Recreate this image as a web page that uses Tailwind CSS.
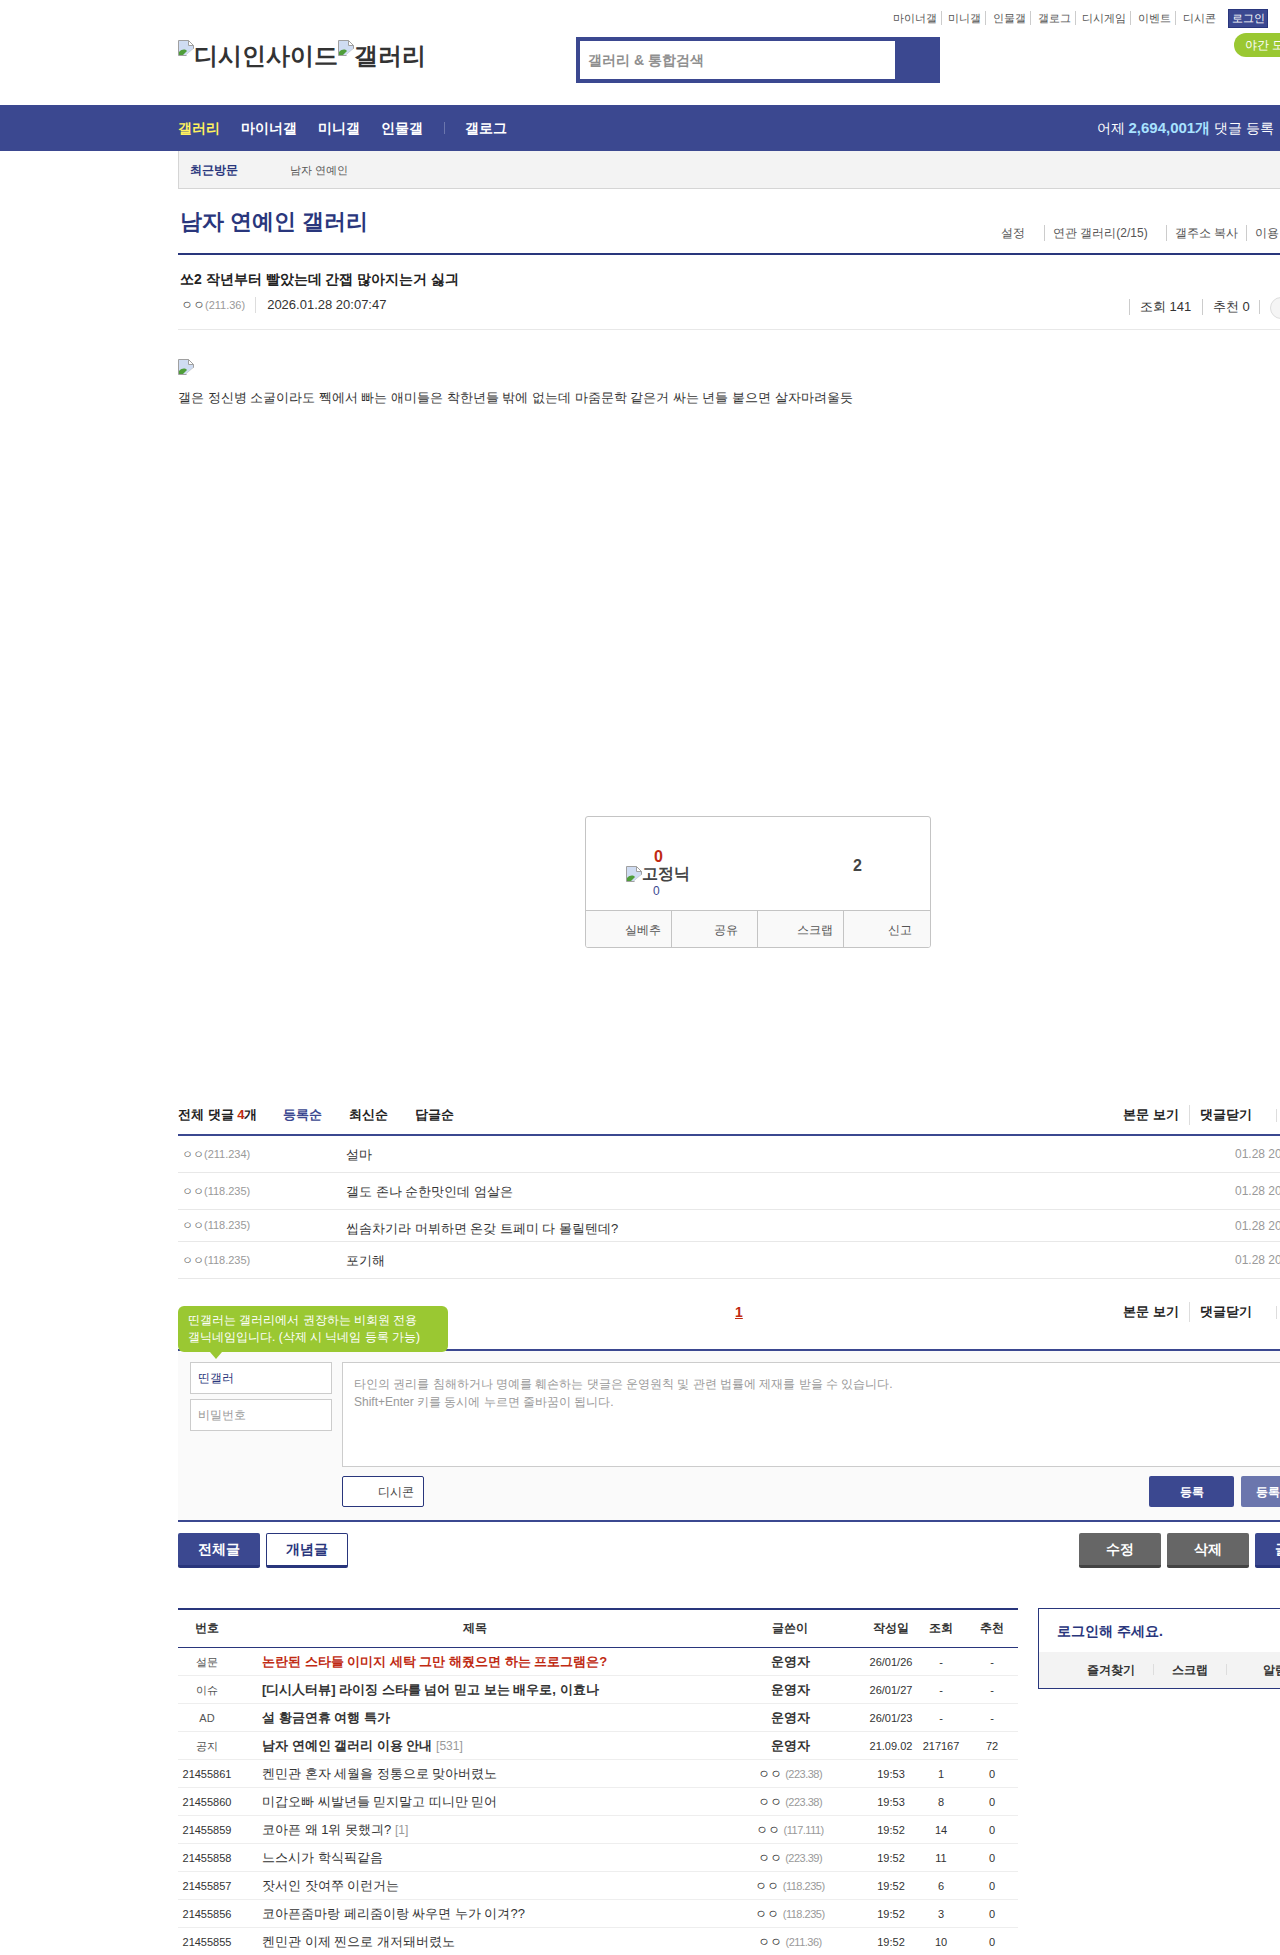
<!doctype html>
<html lang="ko"><head><meta charset="utf-8"><script src="https://cdn.jsdelivr.net/npm/@tailwindcss/browser@4"></script></head>
<body class="overflow-hidden bg-white font-['Liberation_Sans',sans-serif] text-[#333]">
<div class="relative h-[1955px] w-[1280px] overflow-hidden">

<header class="relative flex h-[105px] pl-[178px]">
  <div class="mt-[40px] flex h-[28px] w-[398px] items-start text-[24px] font-bold leading-[28px] text-[#333]">
    <svg class="h-4 w-4 shrink-0" viewBox="0 0 16 16"><path d="M.5.5h10l5 5v3L8 15.5H.5z" fill="#cfdcf2" stroke="#a0a0a0"/><path d="M10.5.5v5h5z" fill="#fff" stroke="#a0a0a0"/><path d="M1 15v-3c3-3 6-3 8-1l-4 4z" fill="#4f9e3a"/><path d="M8 15l7-6v6z" fill="#fff"/></svg><span class="mt-[2px]">디시인사이드</span>
    <svg class="h-4 w-4 shrink-0" viewBox="0 0 16 16"><path d="M.5.5h10l5 5v3L8 15.5H.5z" fill="#cfdcf2" stroke="#a0a0a0"/><path d="M10.5.5v5h5z" fill="#fff" stroke="#a0a0a0"/><path d="M1 15v-3c3-3 6-3 8-1l-4 4z" fill="#4f9e3a"/><path d="M8 15l7-6v6z" fill="#fff"/></svg><span class="mt-[2px]">갤러리</span>
  </div>
  <div class="mt-[37px] flex h-[46px] w-[364px] border-y-4 border-l-4 border-[#3b4890] bg-[#3b4890]">
    <div class="flex h-[38px] w-[315px] items-center bg-white pl-2 text-[14px] font-bold text-[#8f8f8f]">갤러리 &amp; 통합검색</div>
  </div>
  <nav class="absolute left-[893px] top-[11px] flex h-[14px] items-center text-[11px] leading-[14px] text-[#555] whitespace-nowrap">
    <span class="w-[49px] border-r border-[#ccc]">마이너갤</span><span class="w-[44px] border-r border-[#ccc] pl-[6px]">미니갤</span><span class="w-[45px] border-r border-[#ccc] pl-[7px]">인물갤</span><span class="w-[45px] border-r border-[#ccc] pl-[7px]">갤로그</span><span class="w-[55px] border-r border-[#ccc] pl-[6px]">디시게임</span><span class="w-[45px] border-r border-[#ccc] pl-[7px]">이벤트</span><span class="pl-[7px]">디시콘</span>
  </nav>
  <div class="absolute left-[1228px] top-[9px] flex h-[19px] w-[40px] items-center justify-center border border-[#29367c] bg-[#3b4890] text-[11px] text-white">로그인</div>
  <div class="absolute left-[1234px] top-[33px] flex h-[24px] w-[70px] items-center whitespace-nowrap rounded-l-[12px] bg-[#9ac832] pl-[11px] text-[12px] text-white">야간 모드</div>
</header>

<div class="flex h-[46px] items-center justify-between bg-[#3b4890] pl-[178px] pr-[6px] text-[14px] font-bold text-white">
  <div class="flex items-center">
    <span class="w-[63px] text-[#fff25e]">갤러리</span><span class="w-[77px]">마이너갤</span><span class="w-[63px]">미니갤</span><span class="w-[63px]">인물갤</span><span class="h-[12px] border-l border-[#6b76ad]"></span><span class="ml-[20px]">갤로그</span>
  </div>
  <div class="text-[14px] font-normal">어제 <b class="text-[15px] text-[#a8e2ff]">2,694,001개</b> 댓글 등록</div>
</div>

<div class="ml-[178px] flex h-[38px] items-center border-b border-l border-[#d5d5d5] bg-[#f3f3f3] pl-[11px] pt-[1px] text-[12px]">
  <b class="w-[100px] text-[#29367c]">최근방문</b><span class="text-[11px] text-[#555]">남자 연예인</span>
</div>

<main class="ml-[178px] w-[1160px]">
  <div class="flex h-[66px] items-start justify-between border-b-2 border-[#29367c]">
    <h1 class="ml-[2px] mt-[19px] text-[22px] font-bold leading-[28px] text-[#29367c]">남자 연예인 갤러리</h1>
    <div class="mt-[36px] flex items-center whitespace-nowrap text-[12px] leading-[16px] text-[#555]">
      <span class="w-[43px]">설정</span><span class="w-[122px] border-l border-[#ccc] pl-[8px]">연관 갤러리(2/15)</span><span class="w-[80px] border-l border-[#ccc] pl-[8px]">갤주소 복사</span><span class="w-[92px] border-l border-[#ccc] pl-[8px]">이용 안내</span>
    </div>
  </div>

  <div class="relative h-[75px] border-b border-[#e8e8e8]">
    <h2 class="absolute left-[2px] top-[14px] text-[14px] font-bold leading-[20px] text-[#222]">쏘2 작년부터 빨았는데 간잽 많아지는거 싫긔</h2>
    <div class="absolute left-[3px] top-[42px] flex items-center text-[12px] leading-[16px]">
      <span class="text-[#555]">ㅇㅇ</span><span class="text-[11px] text-[#999]">(211.36)</span><span class="ml-[10px] border-l border-[#ddd] pl-[11px] text-[13px] text-[#333]">2026.01.28 20:07:47</span>
    </div>
    <div class="absolute left-[951px] top-[44px] flex items-center whitespace-nowrap text-[13px] leading-[16px] text-[#333]">
      <span class="w-[73px] border-l border-[#ccc] pl-[10px]">조회 141</span><span class="w-[57px] border-l border-[#ccc] pl-[10px]">추천 0</span><span class="h-[14px] border-l border-[#ccc]"></span>
    </div>
    <div class="absolute left-[1092px] top-[42px] h-[22px] w-[40px] rounded-full border border-[#ddd] bg-[#f5f5f5]"></div>
  </div>

  <div class="pt-[29px]">
    <svg class="block h-4 w-4" viewBox="0 0 16 16"><path d="M.5.5h10l5 5v3L8 15.5H.5z" fill="#cfdcf2" stroke="#a0a0a0"/><path d="M10.5.5v5h5z" fill="#fff" stroke="#a0a0a0"/><path d="M1 15v-3c3-3 6-3 8-1l-4 4z" fill="#4f9e3a"/><path d="M8 15l7-6v6z" fill="#fff"/></svg>
    <p class="mt-[14px] text-[13px] leading-[18px] text-[#333]">갤은 정신병 소굴이라도 쩩에서 빠는 애미들은 착한년들 밖에 없는데 마줌문학 같은거 싸는 년들 붙으면 살자마려울듯</p>
  </div>

  <div class="ml-[407px] mt-[409px] h-[132px] w-[346px] overflow-hidden rounded-[3px] border border-[#c4c4c4]">
    <div class="relative h-[94px] border-b border-[#c4c4c4]">
      <b class="absolute left-[68px] top-[30px] text-[16px] leading-[20px] text-[#c02a12]">0</b>
      <div class="absolute left-[40px] top-[47px] flex items-center text-[16px] font-bold leading-[20px] text-[#444]"><svg class="h-4 w-4 shrink-0" viewBox="0 0 16 16"><path d="M.5.5h10l5 5v3L8 15.5H.5z" fill="#cfdcf2" stroke="#a0a0a0"/><path d="M10.5.5v5h5z" fill="#fff" stroke="#a0a0a0"/><path d="M1 15v-3c3-3 6-3 8-1l-4 4z" fill="#4f9e3a"/><path d="M8 15l7-6v6z" fill="#fff"/></svg>고정닉</div>
      <span class="absolute left-[67px] top-[66px] text-[12px] leading-[16px] text-[#3b4890]">0</span>
      <b class="absolute left-[267px] top-[39px] text-[16px] leading-[20px] text-[#444]">2</b>
    </div>
    <div class="grid h-[36px] grid-cols-[86px_86px_86px_86px] bg-[#f9f9f9] text-[12px] text-[#555]">
      <div class="flex items-center justify-end border-r border-[#c4c4c4] pr-[10px] pt-[1px]">실베추</div>
      <div class="flex items-center justify-end border-r border-[#c4c4c4] pr-[19px] pt-[2px]">공유</div>
      <div class="flex items-center justify-end border-r border-[#c4c4c4] pr-[10px] pt-[2px]">스크랩</div>
      <div class="flex items-center justify-end pr-[18px] pt-[2px]">신고</div>
    </div>
  </div>

  <div class="mt-[148px] flex h-[40px] items-center justify-between border-b-2 border-[#3b4890] text-[13px] font-bold text-[#222]">
    <div class="flex items-center"><span class="w-[105px]">전체 댓글 <span class="text-[#c02a12]">4</span>개</span><span class="w-[66px] text-[#3b4890]">등록순</span><span class="w-[66px]">최신순</span><span>답글순</span></div>
    <div class="flex items-center"><span class="w-[66px]">본문 보기</span><span class="w-[87px] border-l border-[#ddd] pl-[10px]">댓글닫기</span><span class="h-[13px] w-[62px] border-l border-[#ddd]"></span></div>
  </div>

  <div class="text-[13px]">
    <div class="flex h-[37px] items-center border-b border-[#e8e8e8]"><span class="w-[168px] pl-[4px] text-[11px] text-[#999]"><span class="text-[#666]">ㅇㅇ</span>(211.234)</span><span class="mt-[1px] text-[#333]">설마</span><span class="ml-auto w-[103px] text-[12px] text-[#999]">01.28 20:16:46</span></div>
    <div class="flex h-[37px] items-center border-b border-[#e8e8e8]"><span class="w-[168px] pl-[4px] text-[11px] text-[#999]"><span class="text-[#666]">ㅇㅇ</span>(118.235)</span><span class="mt-[2px] text-[#333]">갤도 존나 순한맛인데 엄살은</span><span class="ml-auto w-[103px] text-[12px] text-[#999]">01.28 20:20:11</span></div>
    <div class="flex h-[32px] items-center border-b border-[#e8e8e8]"><span class="w-[168px] pl-[4px] text-[11px] text-[#999]"><span class="text-[#666]">ㅇㅇ</span>(118.235)</span><span class="mt-[6px] text-[#333]">씹솜차기라 머뷔하면 온갖 트페미 다 몰릴텐데?</span><span class="ml-auto w-[103px] text-[12px] text-[#999]">01.28 20:22:05</span></div>
    <div class="flex h-[37px] items-center border-b border-[#e8e8e8]"><span class="w-[168px] pl-[4px] text-[11px] text-[#999]"><span class="text-[#666]">ㅇㅇ</span>(118.235)</span><span class="mt-[1px] text-[#333]">포기해</span><span class="ml-auto w-[103px] text-[12px] text-[#999]">01.28 20:24:37</span></div>
  </div>

  <div class="flex h-[72px] items-start justify-between border-b-2 border-[#3b4890] pt-[23px] text-[13px] font-bold leading-[20px] text-[#222]">
    <span class="ml-[557px] text-[14px] text-[#c02a12] underline">1</span>
    <div class="flex items-center"><span class="w-[66px]">본문 보기</span><span class="w-[87px] border-l border-[#ddd] pl-[10px]">댓글닫기</span><span class="h-[13px] w-[62px] border-l border-[#ddd]"></span></div>
  </div>

  <div class="relative h-[171px] border-b-2 border-[#3b4890] bg-[#fafafa]">
    <div class="absolute left-0 top-[-45px] h-[46px] w-[270px] rounded-[6px] bg-[#9ac832] px-[10px] py-[6px] text-[12px] leading-[17px] text-white">
      <div>띤갤러는 갤러리에서 권장하는 비회원 전용</div><div>갤닉네임입니다. (삭제 시 닉네임 등록 가능)</div>
      <div class="absolute left-[32px] top-[46px] h-0 w-0 border-x-[6px] border-t-[7px] border-x-transparent border-t-[#9ac832]"></div>
    </div>
    <div class="absolute left-[12px] top-[11px] flex h-[32px] w-[142px] items-center border border-[#ccc] bg-white pl-[7px] text-[12px] text-[#29367c]">띤갤러</div>
    <div class="absolute left-[12px] top-[48px] flex h-[32px] w-[142px] items-center border border-[#ccc] bg-white pl-[7px] text-[12px] text-[#999]">비밀번호</div>
    <div class="absolute left-[164px] top-[11px] h-[105px] w-[982px] border border-[#ccc] bg-white px-[11px] py-[12px] text-[12px] leading-[18px] text-[#999]">타인의 권리를 침해하거나 명예를 훼손하는 댓글은 운영원칙 및 관련 법률에 제재를 받을 수 있습니다.<br>Shift+Enter 키를 동시에 누르면 줄바꿈이 됩니다.</div>
    <div class="absolute left-[164px] top-[125px] flex h-[31px] w-[82px] items-center justify-end rounded-[2px] border border-[#29367c] bg-white pr-[9px] text-[12px] text-[#444]">디시콘</div>
    <div class="absolute left-[971px] top-[125px] flex h-[31px] w-[85px] items-center justify-center rounded-[2px] bg-[#3b4890] text-[12px] font-bold text-white">등록</div>
    <div class="absolute left-[1063px] top-[125px] flex h-[31px] w-[85px] items-center justify-center rounded-[2px] bg-[#6b76ad] text-[12px] font-bold text-white">등록+추천</div>
  </div>

  <div class="mt-[11px] flex h-[35px] gap-[6px] text-[14px] font-bold">
    <div class="flex w-[82px] shrink-0 items-center justify-center rounded-[2px] border-b-[3px] border-[#29367c] bg-[#3b4890] text-white">전체글</div>
    <div class="flex w-[82px] shrink-0 items-center justify-center rounded-[2px] border border-b-[3px] border-[#29367c] bg-white text-[#29367c]">개념글</div>
    <div class="ml-[725px] flex w-[82px] shrink-0 items-center justify-center rounded-[2px] border-b-[3px] border-[#444] bg-[#666] text-white">수정</div>
    <div class="flex w-[82px] shrink-0 items-center justify-center rounded-[2px] border-b-[3px] border-[#444] bg-[#666] text-white">삭제</div>
    <div class="flex w-[82px] shrink-0 items-center justify-center rounded-[2px] border-b-[3px] border-[#29367c] bg-[#3b4890] text-white">글쓰기</div>
  </div>

  <div class="mt-[40px] flex items-start">
    <div class="w-[840px] shrink-0 border-t-2 border-[#29367c] text-center text-[11px] text-[#333]">
      <div class="grid h-[38px] grid-cols-[58px_478px_152px_50px_50px_52px] items-center border-b border-[#29367c] pb-[2px] text-[12px] font-bold">
        <span>번호</span><span>제목</span><span>글쓴이</span><span>작성일</span><span>조회</span><span>추천</span>
      </div>
      <div class="grid h-[28px] grid-cols-[58px_478px_152px_50px_50px_52px] items-center border-b border-[#eee] pt-[1px]"><span class="text-[#555]">설문</span><b class="pl-[26px] text-left text-[13px] text-[#c02a12]">논란된 스타들 이미지 세탁 그만 해줬으면 하는 프로그램은?</b><b class="text-[13px]">운영자</b><span>26/01/26</span><span>-</span><span>-</span></div>
      <div class="grid h-[28px] grid-cols-[58px_478px_152px_50px_50px_52px] items-center border-b border-[#eee] pt-[1px]"><span class="text-[#555]">이슈</span><b class="pl-[26px] text-left text-[13px]">[디시人터뷰] 라이징 스타를 넘어 믿고 보는 배우로, 이효나</b><b class="text-[13px]">운영자</b><span>26/01/27</span><span>-</span><span>-</span></div>
      <div class="grid h-[28px] grid-cols-[58px_478px_152px_50px_50px_52px] items-center border-b border-[#eee] pt-[1px]"><span class="text-[#555]">AD</span><b class="pl-[26px] text-left text-[13px]">설 황금연휴 여행 특가</b><b class="text-[13px]">운영자</b><span>26/01/23</span><span>-</span><span>-</span></div>
      <div class="grid h-[28px] grid-cols-[58px_478px_152px_50px_50px_52px] items-center border-b border-[#eee] pt-[1px]"><span class="text-[#555]">공지</span><span class="pl-[26px] text-left text-[13px]"><b>남자 연예인 갤러리 이용 안내</b> <span class="text-[12px] text-[#999]">[531]</span></span><b class="text-[13px]">운영자</b><span>21.09.02</span><span>217167</span><span>72</span></div>
      <div class="grid h-[28px] grid-cols-[58px_478px_152px_50px_50px_52px] items-center border-b border-[#eee] pt-[1px]"><span>21455861</span><span class="pl-[26px] text-left text-[13px]">켄민관 혼자 세월을 정통으로 맞아버렸노</span><span class="text-[12px]">ㅇㅇ <span class="text-[11px] tracking-[-0.5px] text-[#999]">(223.38)</span></span><span>19:53</span><span>1</span><span>0</span></div>
      <div class="grid h-[28px] grid-cols-[58px_478px_152px_50px_50px_52px] items-center border-b border-[#eee] pt-[1px]"><span>21455860</span><span class="pl-[26px] text-left text-[13px]">미갑오빠 씨발년들 믿지말고 띠니만 믿어</span><span class="text-[12px]">ㅇㅇ <span class="text-[11px] tracking-[-0.5px] text-[#999]">(223.38)</span></span><span>19:53</span><span>8</span><span>0</span></div>
      <div class="grid h-[28px] grid-cols-[58px_478px_152px_50px_50px_52px] items-center border-b border-[#eee] pt-[1px]"><span>21455859</span><span class="pl-[26px] text-left text-[13px]">코아픈 왜 1위 못했긔? <span class="text-[12px] text-[#999]">[1]</span></span><span class="text-[12px]">ㅇㅇ <span class="text-[11px] tracking-[-0.5px] text-[#999]">(117.111)</span></span><span>19:52</span><span>14</span><span>0</span></div>
      <div class="grid h-[28px] grid-cols-[58px_478px_152px_50px_50px_52px] items-center border-b border-[#eee] pt-[1px]"><span>21455858</span><span class="pl-[26px] text-left text-[13px]">느스시가 학식픽같음</span><span class="text-[12px]">ㅇㅇ <span class="text-[11px] tracking-[-0.5px] text-[#999]">(223.39)</span></span><span>19:52</span><span>11</span><span>0</span></div>
      <div class="grid h-[28px] grid-cols-[58px_478px_152px_50px_50px_52px] items-center border-b border-[#eee] pt-[1px]"><span>21455857</span><span class="pl-[26px] text-left text-[13px]">잣서인 잣여쭈 이런거는</span><span class="text-[12px]">ㅇㅇ <span class="text-[11px] tracking-[-0.5px] text-[#999]">(118.235)</span></span><span>19:52</span><span>6</span><span>0</span></div>
      <div class="grid h-[28px] grid-cols-[58px_478px_152px_50px_50px_52px] items-center border-b border-[#eee] pt-[1px]"><span>21455856</span><span class="pl-[26px] text-left text-[13px]">코아픈줌마랑 페리줌이랑 싸우면 누가 이겨??</span><span class="text-[12px]">ㅇㅇ <span class="text-[11px] tracking-[-0.5px] text-[#999]">(118.235)</span></span><span>19:52</span><span>3</span><span>0</span></div>
      <div class="grid h-[28px] grid-cols-[58px_478px_152px_50px_50px_52px] items-center border-b border-[#eee] pt-[1px]"><span>21455855</span><span class="pl-[26px] text-left text-[13px]">켄민관 이제 찐으로 개저돼버렸노</span><span class="text-[12px]">ㅇㅇ <span class="text-[11px] tracking-[-0.5px] text-[#999]">(211.36)</span></span><span>19:52</span><span>10</span><span>0</span></div>
    </div>
    <aside class="ml-[20px] h-[81px] w-[300px] shrink-0 border border-[#29367c]">
      <div class="flex h-[43px] items-center pl-[18px] pt-[2px] text-[14px] font-bold text-[#29367c]">로그인해 주세요.</div>
      <div class="relative h-[36px] bg-[#f3f3f3] text-[12px] font-bold leading-[16px] text-[#333]">
        <span class="absolute left-[48px] top-[10px]">즐겨찾기</span><span class="absolute left-[114px] top-[12px] h-[11px] border-l border-[#ddd]"></span><span class="absolute left-[133px] top-[10px]">스크랩</span><span class="absolute left-[187px] top-[12px] h-[11px] border-l border-[#ddd]"></span><span class="absolute left-[224px] top-[10px]">알림</span>
      </div>
    </aside>
  </div>
</main>
</div>
</body></html>
